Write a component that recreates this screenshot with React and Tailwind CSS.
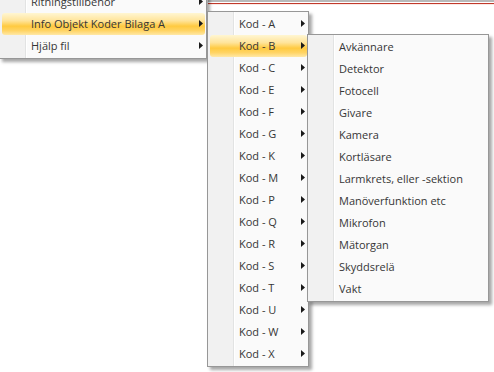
const level1 = ["Rithingstillbehör", "Info Objekt Koder Bilaga A", "Hjälp fil"];
const level2 = ["A", "B", "C", "E", "F", "G", "K", "M", "P", "Q", "R", "S", "T", "U", "W", "X"].map((k) => `Kod - ${k}`);
const level3 = [
  "Avkännare",
  "Detektor",
  "Fotocell",
  "Givare",
  "Kamera",
  "Kortläsare",
  "Larmkrets, eller -sektion",
  "Manöverfunktion etc",
  "Mikrofon",
  "Mätorgan",
  "Skyddsrelä",
  "Vakt",
];

function Arrow() {
  return (
    <svg width="4" height="7" viewBox="0 0 4 7" className="shrink-0">
      <path d="M0 0 L4 3.5 L0 7 Z" fill="#1a1a1a" />
    </svg>
  );
}

// popup menu, office 2007 look: gray gutter on the left, yellow hover bar
function Menu({ items, active, submenus, className }) {
  return (
    <div
      className={`absolute flex flex-col border border-[#979797] py-[1px] shadow-[3px_3px_3px_rgba(0,0,0,0.35)] bg-[linear-gradient(to_right,#f1f1f1_0,#f1f1f1_25px,#e2e3e3_25px,#e2e3e3_26px,#ffffff_26px,#ffffff_27px,#fafafa_27px)] ${className}`}
    >
      {items.map((label, i) => (
        <div
          key={label}
          className={`flex h-[22px] items-center ml-[2px] mr-[1px] pl-[29px] pr-[2px] pb-px rounded-[3px] ${
            i === active
              ? "bg-[linear-gradient(to_bottom,#fff6d2_0%,#ffe49a_35%,#ffca40_60%,#ffd464_80%,#ffe8a6_100%)]"
              : ""
          }`}
        >
          <span className="flex-1 whitespace-nowrap text-[11px] text-[#363636] leading-none">{label}</span>
          {submenus && <Arrow />}
        </div>
      ))}
    </div>
  );
}

export default function App() {
  return (
    <div
      className="relative w-[494px] h-[372px] overflow-hidden bg-white"
      style={{ fontFamily: '"Open Sans", "Noto Sans", sans-serif' }}
    >
      {/* window edge behind the menus */}
      <div className="absolute left-[208px] top-0 right-0 h-[6px] border-t-2 border-[#b9b9b9]">
        <div className="h-[1px] mt-[1px] bg-[#c0392b]" />
        <div className="h-[1px] bg-[#fbe9e5]" />
      </div>

      <Menu items={level1} active={1} submenus className="left-[-1px] top-[-11px] w-[208px]" />
      <Menu items={level2} active={1} submenus className="left-[207px] top-[11px] w-[102px]" />
      <Menu items={level3} active={-1} className="left-[307px] top-[34px] w-[182px]" />
    </div>
  );
}
